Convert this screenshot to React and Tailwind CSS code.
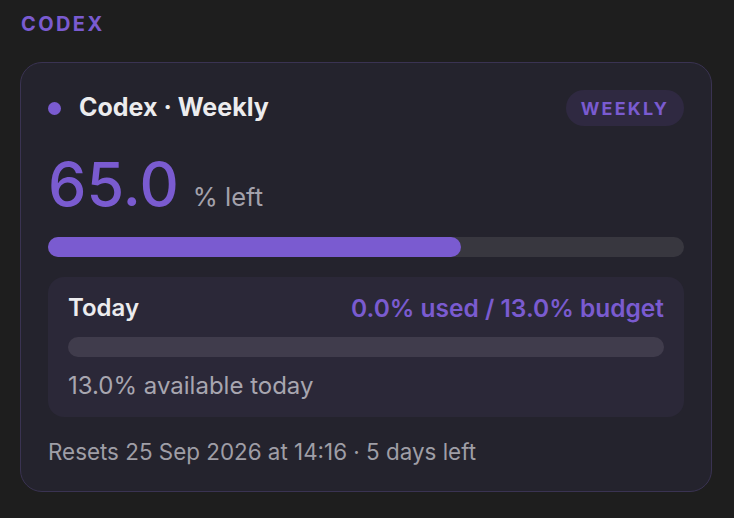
import React from "react";

const purple = "text-[#7a5bd0]";

const App = () => {
  return (
    <div
      className="min-h-screen bg-[#1e1e1e] pl-5 pr-[22px] pt-3"
      style={{ fontFamily: "Inter, 'Noto Sans', sans-serif" }}
    >
      <div className={`pl-px text-[20px] font-bold leading-6 tracking-[0.12em] ${purple}`}>
        CODEX
      </div>
      <div className="mt-[26px] rounded-[22px] border border-[#3a3352] bg-[#24232d] px-[27px] pt-[27px] pb-[25px]">
        <div className="flex h-9 items-center justify-between">
          <div className="flex items-center gap-[18px]">
            <span className="h-[13px] w-[13px] rounded-full bg-[#7a5bd0]" />
            <span className="text-[25px] font-bold text-[#ececee]">Codex · Weekly</span>
          </div>
          <span
            className={`flex h-9 items-center rounded-full bg-[#2f2941] px-[15px] text-[18px] font-bold tracking-[0.12em] ${purple}`}
          >
            WEEKLY
          </span>
        </div>

        <div className="mt-[28px] flex items-baseline gap-[14px]">
          <span className={`text-[61px] font-medium leading-[61px] ${purple}`}>65.0</span>
          <span className="text-[25.5px] text-[#a3a1ab]">% left</span>
        </div>

        <div className="mt-[21px] h-5 w-full rounded-full bg-[#38373f]">
          <div className="h-5 w-[65%] rounded-full bg-[#7a5bd0]" />
        </div>

        <div className="mt-5 rounded-2xl bg-[#2b2838] px-5 pt-[17px] pb-[17px]">
          <div className="flex items-center justify-between font-semibold leading-7">
            <span className="text-[24px] text-[#ececee]">Today</span>
            <span className={`text-[24.5px] ${purple}`}>0.0% used / 13.0% budget</span>
          </div>
          <div className="mt-[15px] h-5 w-full rounded-full bg-[#403c4c]" />
          <div className="mt-[15px] text-[24px] leading-7 text-[#a8a6b0]">13.0% available today</div>
        </div>

        <div className="mt-[21px] text-[22.4px] leading-7 text-[#9f9ea6]">
          Resets 25 Sep 2026 at 14:16 · 5 days left
        </div>
      </div>
    </div>
  );
};

export default App;
